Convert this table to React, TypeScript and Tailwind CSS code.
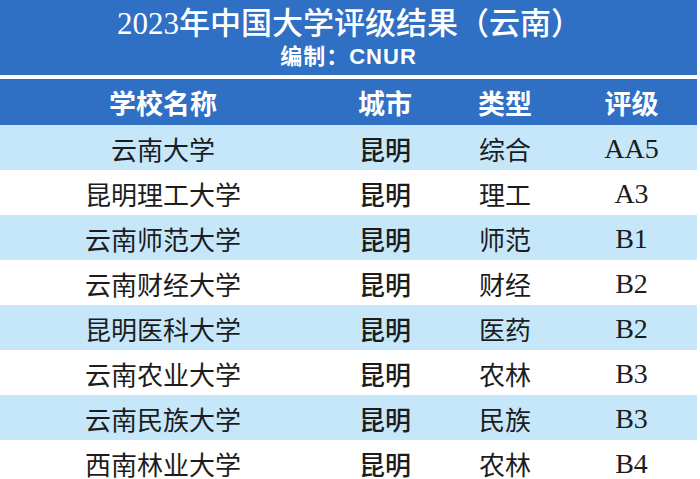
import React from "react";

const rows = [
  ["云南大学", "昆明", "综合", "AA5"],
  ["昆明理工大学", "昆明", "理工", "A3"],
  ["云南师范大学", "昆明", "师范", "B1"],
  ["云南财经大学", "昆明", "财经", "B2"],
  ["昆明医科大学", "昆明", "医药", "B2"],
  ["云南农业大学", "昆明", "农林", "B3"],
  ["云南民族大学", "昆明", "民族", "B3"],
  ["西南林业大学", "昆明", "农林", "B4"],
];

export default function App() {
  return (
    <div className="w-[700px] h-[479px] overflow-hidden bg-white">
      <div className="w-[697px]">
        <div className="h-[75px] bg-[#2f6fc4] flex flex-col items-center text-white">
          <div className="mt-[5px] h-[38px] leading-[38px] text-[31px] font-medium font-['Liberation_Serif','Noto_Sans_CJK_SC',serif] pl-[2px]">
            2023年中国大学评级结果（云南）
          </div>
          <div className="h-[30px] leading-[28px] text-[22px] font-bold font-['Liberation_Sans','Noto_Sans_CJK_SC',sans-serif] tracking-[1px]">
            编制：CNUR
          </div>
        </div>
        <div className="h-[4px] bg-white" />
        <div className="h-[46px] bg-[#2f6fc4] grid grid-cols-[326px_118px_122px_131px] items-center text-white text-[27px] font-bold font-['Noto_Sans_CJK_SC',sans-serif] leading-none">
          <div className="text-center">学校名称</div>
          <div className="text-center">城市</div>
          <div className="text-center">类型</div>
          <div className="text-center">评级</div>
        </div>
        {rows.map((r, i) => (
          <div
            key={i}
            className={`h-[45px] grid grid-cols-[326px_118px_122px_131px] items-center text-[#1c1c1c] leading-none pt-[2px] ${i % 2 === 0 ? "bg-[#c5e7f9]" : "bg-white"}`}
          >
            <div className="text-center text-[26px] font-['Noto_Sans_CJK_SC',sans-serif]">{r[0]}</div>
            <div className="text-center text-[26px] font-medium font-['Noto_Sans_CJK_SC',sans-serif]">{r[1]}</div>
            <div className="text-center text-[26px] font-['Noto_Sans_CJK_SC',sans-serif]">{r[2]}</div>
            <div className="text-center text-[28px] font-['Liberation_Serif',serif]">{r[3]}</div>
          </div>
        ))}
      </div>
    </div>
  );
}
